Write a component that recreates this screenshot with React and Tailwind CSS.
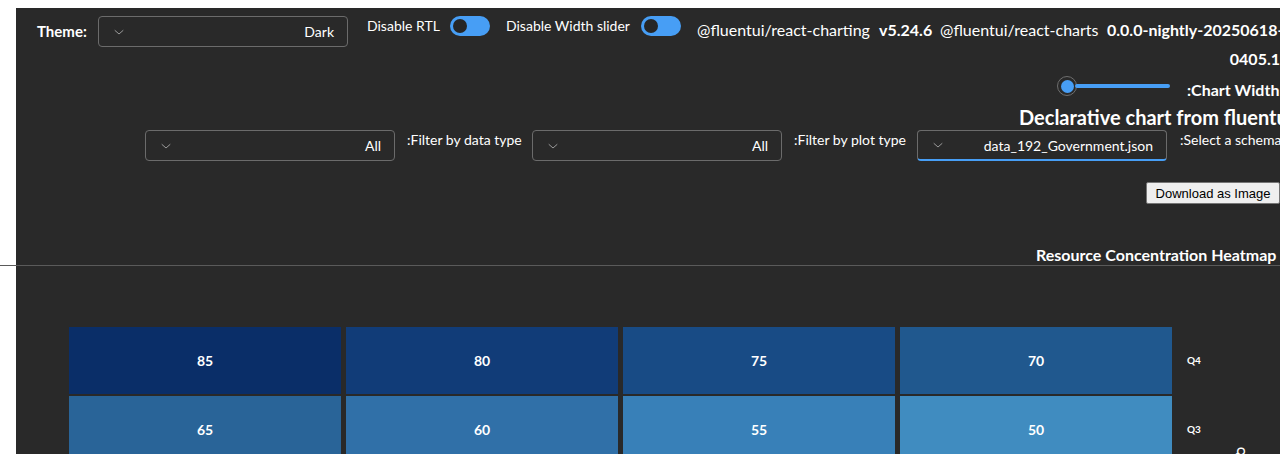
import React from "react"

const font = { fontFamily: "Lato, 'Open Sans', sans-serif" }

function Chevron() {
  return (
    <svg width="12" height="12" viewBox="0 0 12 12" fill="none" className="shrink-0">
      <path d="M2 4.5 L6 8 L10 4.5" stroke="#9a9a9a" strokeWidth="1" strokeLinecap="round" strokeLinejoin="round" />
    </svg>
  )
}

function Dropdown({ value, focused }) {
  return (
    <div
      className={
        "w-[250px] h-[31px] shrink-0 rounded-[4px] border border-[#6b6b6b] flex items-center pl-[14px] pr-[13px] " +
        (focused ? "border-b-2 border-b-[#479ef5]" : "")
      }
    >
      <Chevron />
      <span className="ml-auto text-[14px] text-white whitespace-nowrap">{value}</span>
    </div>
  )
}

function Toggle() {
  return (
    <div className="w-[40px] h-[20px] rounded-full bg-[#479ef5] flex items-center pl-[3px] shrink-0">
      <div className="w-[14px] h-[14px] rounded-full bg-[#262626]" />
    </div>
  )
}

const rows = [
  { label: "Q4", cells: [
    { v: 85, c: "bg-[#0a2e68]" },
    { v: 80, c: "bg-[#113c78]" },
    { v: 75, c: "bg-[#184b85]" },
    { v: 70, c: "bg-[#20588e]" },
  ] },
  { label: "Q3", cells: [
    { v: 65, c: "bg-[#296498]" },
    { v: 60, c: "bg-[#3070a8]" },
    { v: 55, c: "bg-[#3880b8]" },
    { v: 50, c: "bg-[#408cc0]" },
  ] },
]

export default function App() {
  return (
    <div className="w-full h-[454px] overflow-hidden bg-white pl-4 pt-2" style={font}>
      <div className="bg-[#292929] h-full text-white">
        {/* top controls */}
        <div className="flex items-start pl-[21px] pt-2 whitespace-nowrap">
          <span className="w-[61px] mt-[4px] text-[15px] leading-[22px] font-bold shrink-0">Theme:</span>
          <Dropdown value="Dark" />
          <span className="ml-[19px] w-[83px] text-[14px] leading-[20px] shrink-0">Disable RTL</span>
          <Toggle />
          <span className="ml-[16px] w-[135px] text-[14px] leading-[20px] shrink-0">Disable Width slider</span>
          <Toggle />
          <div className="ml-[16px] text-[16px] leading-[22px] mt-[3px] shrink-0">
            <div className="flex">
              <span className="w-[182px]">@fluentui/react-charting</span>
              <span className="w-[61px] font-bold">v5.24.6</span>
              <span className="w-[167px]">@fluentui/react-charts</span>
              <span className="font-bold">0.0.0-nightly-20250618-</span>
            </div>
            <div className="w-[583px] text-right font-bold mt-[7px]">0405.1</div>
          </div>
        </div>

        {/* chart width slider */}
        <div className="flex items-start pl-[1041px] mt-[6px] whitespace-nowrap">
          <div className="w-[20px] h-[20px] rounded-full border border-[#6e6e6e] flex items-center justify-center shrink-0">
            <div className="w-[13px] h-[13px] rounded-full bg-[#479ef5]" />
          </div>
          <div className="w-[95px] h-[4px] mt-[8px] -ml-[2px] rounded-full bg-[#479ef5] shrink-0" />
          <span className="ml-[17px] mt-[3px] text-[16px] leading-[22px] font-bold">:Chart Width</span>
        </div>

        <div className="pl-[1003px] mt-[3px] text-[20px] font-bold whitespace-nowrap leading-[26px]">
          Declarative chart from fluentui
        </div>

        {/* filters */}
        <div className="flex items-start pl-[129px] whitespace-nowrap">
          <Dropdown value="All" />
          <span className="ml-[12px] w-[125px] text-[14px] leading-[20px] shrink-0">:Filter by data type</span>
          <Dropdown value="All" />
          <span className="ml-[12px] w-[123px] text-[14px] leading-[20px] shrink-0">:Filter by plot type</span>
          <Dropdown value="data_192_Government.json" focused />
          <span className="ml-[13px] text-[14px] leading-[20px] shrink-0">:Select a schema</span>
        </div>

        <div className="pl-[1130px] mt-[21px] leading-none">
          <button
            className="h-[22px] w-[134px] bg-[#efefef] border border-[#767676] rounded-[2px] text-[13px] text-black whitespace-nowrap"
            style={{ fontFamily: "'Liberation Sans', Arial, sans-serif" }}
          >
            Download as Image
          </button>
        </div>

        <div className="pl-[1020px] mt-[41px] text-[16px] font-bold whitespace-nowrap leading-[20px]">
          Resource Concentration Heatmap
        </div>
        <div className="h-px bg-[#5a5a5a] -ml-4" />

        {/* heatmap */}
        <div className="relative pl-[53px] pt-[61px]">
          <div className="flex flex-col gap-[2px]">
            {rows.map((r) => (
              <div key={r.label} className="flex items-center">
                <div className="flex gap-[5px]">
                  {r.cells.map((cell) => (
                    <div
                      key={cell.v}
                      className={"w-[272px] h-[67px] flex items-center justify-center text-[14px] font-bold text-white " + cell.c}
                    >
                      {cell.v}
                    </div>
                  ))}
                </div>
                <span className="ml-[15px] text-[10px] font-bold text-white">{r.label}</span>
              </div>
            ))}
          </div>
          <span className="absolute left-[1233px] top-[181px] rotate-90 origin-top-left text-[11px] font-bold whitespace-nowrap">
            Quarter
          </span>
        </div>
      </div>
    </div>
  )
}
